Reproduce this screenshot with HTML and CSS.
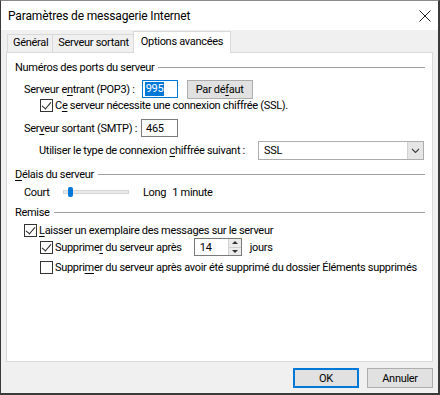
FILE: index.html
```html
<!DOCTYPE html>
<html lang="fr">
<head>
  <meta charset="UTF-8">
  <title>Paramètres de messagerie Internet</title>
  <link rel="stylesheet" href="styles.css">
</head>
<body>
  <div class="window">
    <div class="titlebar">
      <span class="title">Paramètres de messagerie Internet</span>
      <svg class="close" width="12" height="12" viewBox="0 0 12 12"><path d="M0.5 0.5L11.5 11.5M11.5 0.5L0.5 11.5" stroke="#222" stroke-width="1"/></svg>
    </div>

    <div class="body">
      <div class="tabs">
        <div class="tab">Général</div>
        <div class="tab">Serveur sortant</div>
        <div class="tab active">Options avancées</div>
      </div>

      <div class="panel">
        <div class="heading heading-first"><span>Numéros des ports du serveur</span></div>

        <div class="row row-entrant">
          <span class="label">Serveur e<u>n</u>trant (POP3) :</span>
          <span class="field field-pop"><span class="sel">995</span></span>
          <span class="btn btn-default">Par dé<u>f</u>aut</span>
        </div>
        <div class="row row-ssl">
          <span class="check on"></span>
          <span>C<u>e</u> serveur nécessite une connexion chiffrée (SSL).</span>
        </div>
        <div class="row row-smtp">
          <span class="label">Ser<u>v</u>eur sortant (SMTP) :</span>
          <span class="field field-smtp">465</span>
        </div>
        <div class="row row-type">
          <span class="label">Utiliser le type de connexion <u>c</u>hiffrée suivant :</span>
          <span class="select">
            <span>SSL</span>
            <span class="drop"><svg width="9" height="6" viewBox="0 0 9 6"><path d="M1 1L4.5 4.5L8 1" fill="none" stroke="#444" stroke-width="1.2"/></svg></span>
          </span>
        </div>

        <div class="heading heading-delais"><span><u>D</u>élais du serveur</span></div>
        <div class="row row-slider">
          <span class="label-court">Court</span>
          <span class="track"><span class="thumb"></span></span>
          <span class="label-long">Long</span>
          <span>1 minute</span>
        </div>

        <div class="heading heading-remise"><span>Remise</span></div>
        <div class="row row-laisser">
          <span class="check on"></span>
          <span><u>L</u>aisser un exemplaire des messages sur le serveur</span>
        </div>
        <div class="row row-suppr">
          <span class="check on"></span>
          <span class="label-suppr">Supprime<u>r</u> du serveur après</span>
          <span class="spinner">
            <span class="spin-value">14</span>
            <span class="spin-btns">
              <span class="spin-up"></span>
              <span class="spin-down"></span>
            </span>
          </span>
          <span class="label-jours">jours</span>
        </div>
        <div class="row row-suppr2">
          <span class="check"></span>
          <span>Suppri<u>m</u>er du serveur après avoir été supprimé du dossier Éléments supprimés</span>
        </div>
      </div>

      <div class="footer">
        <span class="btn btn-ok">OK</span>
        <span class="btn btn-cancel">Annuler</span>
      </div>
    </div>
  </div>
</body>
</html>
```

FILE: styles.css
```css
* { box-sizing: border-box; margin: 0; padding: 0; }
body {
  font-family: Roboto, 'Noto Sans', sans-serif;
  font-size: 11px;
  letter-spacing: -0.3px;
  color: #000;
  background: #fff;
  width: 440px;
  height: 395px;
  overflow: hidden;
  white-space: nowrap;
}
u { text-decoration-thickness: 1px; text-underline-offset: 2px; }
.window {
  width: 440px;
  height: 395px;
  border: 1px solid #3a3a3a;
  border-top-color: #8a8a8a;
  border-right-width: 2px;
  border-bottom-width: 2px;
  display: flex;
  flex-direction: column;
}
.titlebar {
  height: 29px;
  background: #fff;
  display: flex;
  align-items: center;
  justify-content: space-between;
  padding: 0 7px 0 7px;
}
.title {
  font-size: 12px;
  letter-spacing: -0.15px;
}
.body {
  flex: 1;
  background: #f0f0f0;
  padding: 2px 5px 0 5px;
  display: flex;
  flex-direction: column;
}
.tabs {
  display: flex;
  align-items: flex-end;
  height: 20px;
  padding-left: 1px;
  position: relative;
  z-index: 1;
}
.tab {
  height: 18px;
  line-height: 16px;
  padding: 0 4px 0 5px;
  border: 1px solid #d9d9d9;
  border-bottom: none;
  background: #f0f0f0;
  margin-right: -1px;
}
.tab.active {
  height: 22px;
  margin-bottom: -1px;
  padding: 0 7px 0 7px;
  line-height: 20px;
  background: #fff;
}
.panel {
  height: 310px;
  background: #fff;
  border: 1px solid #d9d9d9;
  padding: 0 7px 0 8px;
}
.heading {
  display: flex;
  align-items: center;
  height: 16px;
}
.heading::after {
  content: "";
  flex: 1;
  height: 1px;
  background: #a0a0a0;
  margin-left: 4px;
}
.heading-first { margin-top: 6px; }
.heading-delais { margin-top: 6px; }
.heading-remise { margin-top: 4px; }
.row {
  display: flex;
  align-items: center;
  padding-left: 9px;
}
.row-entrant { height: 18px; margin-top: 5px; }
.row-ssl { height: 14px; padding-left: 25px; }
.row-smtp { height: 18px; margin-top: 7px; }
.row-type { height: 19px; margin-top: 4px; padding-left: 24px; }
.row-slider { height: 16px; margin-top: 2px; }
.row-laisser { height: 14px; margin-top: 3px; }
.row-suppr { height: 18px; margin-top: 1px; padding-left: 25px; }
.row-suppr2 { height: 14px; margin-top: 4px; padding-left: 25px; }

.field {
  height: 18px;
  border: 1px solid #7a7a7a;
  background: #fff;
  display: flex;
  align-items: center;
  padding-left: 4px;
}
.field-pop { width: 36px; margin-left: 7px; border-color: #0078d7; padding-left: 2px; }
.sel { background: #0078d7; color: #fff; line-height: 14px; padding: 0 1px; }
.field-smtp { width: 37px; margin-left: 4px; }
.btn {
  display: inline-flex;
  align-items: center;
  justify-content: center;
  background: #e1e1e1;
  border: 1px solid #adadad;
  height: 19px;
}
.btn-default { width: 66px; margin-left: 9px; }
.check {
  width: 13px;
  height: 13px;
  border: 1px solid #333;
  background: #fff;
  margin-right: 2px;
  flex-shrink: 0;
  position: relative;
}
.check.on::after {
  content: "";
  position: absolute;
  left: 3px;
  top: 0px;
  width: 4px;
  height: 8px;
  border-right: 1px solid #222;
  border-bottom: 1px solid #222;
  transform: rotate(40deg);
}
.select {
  margin-left: auto;
  margin-right: 1px;
  width: 166px;
  height: 19px;
  border: 1px solid #acacac;
  background: #fff;
  display: flex;
  align-items: center;
  justify-content: space-between;
  padding: 0 0 0 5px;
}
.drop {
  width: 16px;
  height: 17px;
  background: #e5e5e5;
  border-left: 1px solid #d0d0d0;
  display: flex;
  align-items: center;
  justify-content: center;
}
.label-court { width: 39px; }
.track {
  width: 66px;
  height: 4px;
  background: #e7eaec;
  border: 1px solid #d6d6d6;
  position: relative;
}
.thumb {
  position: absolute;
  left: 4px;
  top: -4px;
  width: 5px;
  height: 10px;
  border-radius: 2px;
  background: #0078d7;
}
.label-long { margin-left: 14px; margin-right: 6px; }
.spinner {
  margin-left: 12px;
  width: 48px;
  height: 18px;
  border: 1px solid #7a7a7a;
  background: #fff;
  display: flex;
  align-items: center;
  justify-content: space-between;
  padding-left: 5px;
}
.spin-btns {
  width: 13px;
  height: 16px;
  display: flex;
  flex-direction: column;
  border-left: 1px solid #d0d0d0;
}
.spin-up, .spin-down {
  flex: 1;
  background: #ececec;
  position: relative;
}
.spin-up { border-bottom: 1px solid #cfcfcf; }
.spin-up::after, .spin-down::after {
  content: "";
  position: absolute;
  left: 3px;
  border-left: 3px solid transparent;
  border-right: 3px solid transparent;
}
.spin-up::after { top: 2px; border-bottom: 3px solid #333; }
.spin-down::after { top: 2px; border-top: 3px solid #333; }
.label-jours { margin-left: 8px; }
.footer {
  display: flex;
  justify-content: flex-end;
  padding-top: 6px;
  gap: 8px;
}
.btn-ok, .btn-cancel { width: 66px; height: 20px; }
.btn-ok { border: 2px solid #0078d7; }
```
